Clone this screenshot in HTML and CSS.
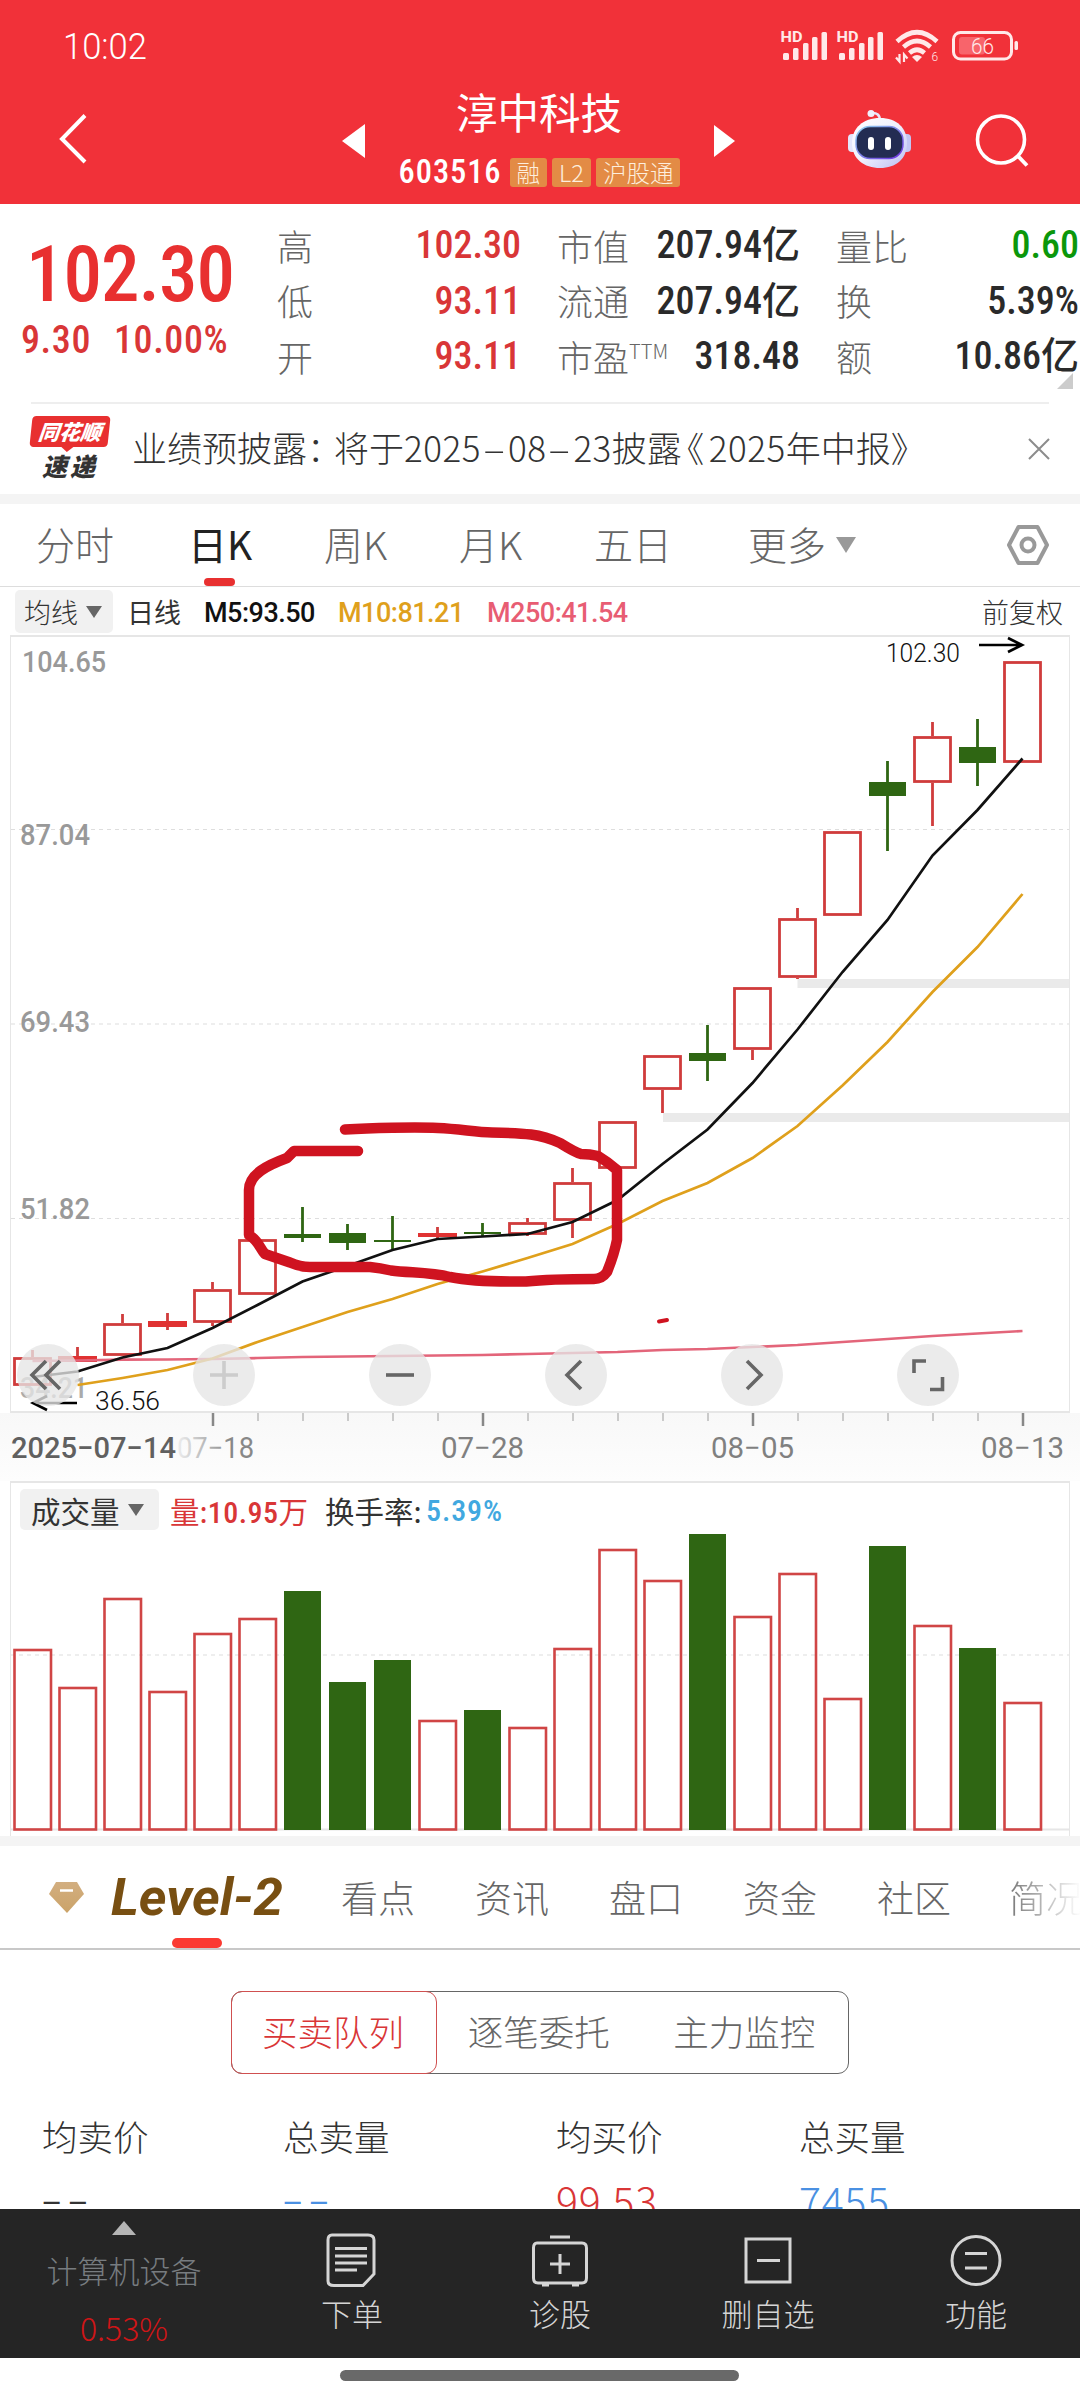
FILE: index.html
```html
<!DOCTYPE html>
<html lang="zh-Hans">
<head>
  <meta charset="UTF-8" />
  <meta name="viewport" content="width=device-width, initial-scale=1.0" />
  <title>淳中科技 603516</title>
  <link rel="stylesheet" href="styles.css">
</head>
<body>
  <header class="top">
    <div class="status">
      <svg class="clock" width="90" height="44"><text x="-1" y="31" textLength="84" lengthAdjust="spacingAndGlyphs">10:02</text></svg>
      <svg class="signals" width="240" height="36" viewBox="780 28 240 36">
        <g id="sig" fill="#ffe9e9">
          <text x="780.5" y="42" font-size="14" font-weight="700" textLength="22" lengthAdjust="spacingAndGlyphs">HD</text>
          <rect x="783" y="53" width="6" height="7" rx="1.5" /><rect x="793" y="48" width="5.5" height="12" rx="1.5" />
          <rect x="803" y="43" width="5.5" height="17" rx="1.5" /><rect x="812" y="37" width="5.5" height="23" rx="1.5" />
          <rect x="821.5" y="32" width="5.5" height="28" rx="1.5" />
        </g>
        <use href="#sig" x="56" />
        <g fill="none" stroke="#ffe9e9" stroke-width="4.6">
          <path d="M897 41.5Q917 23 937 41.5M903.5 47Q917 35 930.5 47M909.5 53Q917 46.5 924.5 53" />
        </g>
        <path d="M912 57Q917 53 922 57L917 62Z" fill="#ffe9e9" />
        <path d="M899.5 54V61.5L896 57.5M904 62V54.5L907.5 58.5" fill="none" stroke="#ffe9e9" stroke-width="2.2" />
        <text x="931.5" y="61" font-size="12" fill="#ffe9e9">6</text>
        <rect x="953.5" y="32.5" width="58" height="26.5" rx="7" fill="none" stroke="#ffe9e9" stroke-width="3" />
        <rect x="959" y="37" width="26" height="17.5" rx="3" fill="#f8646b" />
        <text x="971" y="53.5" font-size="22" fill="#ffe9e9" textLength="23" lengthAdjust="spacingAndGlyphs">66</text>
        <rect x="1014.5" y="41" width="3.5" height="9" rx="1.5" fill="#ffe9e9" />
      </svg>
    </div>
    <div class="titlebar">
      <svg class="back" width="30" height="52" viewBox="58 112 30 52"><path d="M85 115.5L62 139L85 162" fill="none" stroke="#fff" stroke-width="4" /></svg>
      <svg class="prev" width="24" height="34"><path d="M0 17L23 0V34Z" fill="#fff" /></svg>
      <div class="name">
        <h1>淳中科技</h1>
        <div class="code"><b class="num">603516</b><i>融</i><i>L2</i><i>沪股通</i></div>
      </div>
      <svg class="next" width="21" height="32"><path d="M21 16L0 0V32Z" fill="#fff" /></svg>
      <svg class="robot" width="66" height="62" viewBox="847 108 66 62">
        <defs>
          <linearGradient id="head" x1="0" y1="0" x2="1" y2="1"><stop offset="0" stop-color="#fff" /><stop offset=".5" stop-color="#f0f0fd" /><stop offset="1" stop-color="#b9bcf2" /></linearGradient>
          <linearGradient id="rim" x1="0" y1="0" x2="1" y2="1"><stop offset="0" stop-color="#8fd4ef" /><stop offset="1" stop-color="#6c2ee0" /></linearGradient>
        </defs>
        <path d="M871 113Q880 112 880 121" fill="none" stroke="#e9e6fb" stroke-width="2.5" /><circle cx="871" cy="113.5" r="3.5" fill="#f0effc" />
        <rect x="848" y="134" width="9" height="18" rx="4" fill="#e4e6fb" /><rect x="902" y="134" width="9" height="18" rx="4" fill="#c2c5f3" />
        <path d="M880 118C897 118 907 128 907 143C907 159 896 168 880 168C864 168 852 159 852 143C852 128 863 118 880 118Z" fill="url(#head)" />
        <rect x="856" y="126.5" width="47" height="32" rx="14" fill="#232c52" stroke="url(#rim)" stroke-width="1.5" />
        <rect x="868" y="137" width="6" height="13" rx="3" fill="#fff" /><rect x="885" y="137" width="6" height="13" rx="3" fill="#fff" />
      </svg>
      <svg class="search" width="54" height="54" viewBox="975 113 54 54"><circle cx="1001" cy="139.5" r="23.5" fill="none" stroke="#fff" stroke-width="3.6" /><path d="M1017 155L1027 165.5" stroke="#fff" stroke-width="3.8" /></svg>
    </div>
  </header>

  <section class="quote">
    <div class="price">
      <strong class="num">102.30</strong>
      <div><span class="num">9.30</span><span class="num">10.00%</span></div>
    </div>
    <dl class="c1"><dt>高</dt><dd class="num red">102.30</dd><dt>低</dt><dd class="num red">93.11</dd><dt>开</dt><dd class="num red">93.11</dd></dl>
    <dl class="c2"><dt>市值</dt><dd class="num">207.94亿</dd><dt>流通</dt><dd class="num">207.94亿</dd><dt>市盈<sup>TTM</sup></dt><dd class="num">318.48</dd></dl>
    <dl class="c3"><dt>量比</dt><dd class="num green">0.60</dd><dt>换</dt><dd class="num">5.39%</dd><dt>额</dt><dd class="num">10.86亿</dd></dl>
    <span class="corner"></span>
  </section>

  <section class="news">
    <div class="logo"><span>同花顺</span><b>速递</b></div>
    <p>业绩预披露<em class="colon">：</em>将于<span>2025<u>–</u>08<u>–</u>23</span>披露<em>《</em><span>2025</span>年中报》</p>
    <svg width="22" height="22"><path d="M1 1L21 21M21 1L1 21" stroke="#8c8c8c" stroke-width="2" /></svg>
  </section>

  <nav class="periods">
    <a>分时</a><a class="on">日K</a><a>周K</a><a>月K</a><a>五日</a><a>更多<i class="down"></i></a>
    <svg width="44" height="42" viewBox="0 0 44 42"><path d="M12.5 3H31.5L41 21L31.5 39H12.5L3 21Z" fill="none" stroke="#999" stroke-width="4" stroke-linejoin="round" /><circle cx="22" cy="21" r="6.5" fill="none" stroke="#999" stroke-width="4" /></svg>
  </nav>

  <div class="ma">
    <span class="chip">均线<i class="down"></i></span>
    <span class="day">日线</span>
    <span class="num m5">M5:93.50</span><span class="num m10">M10:81.21</span><span class="num m250">M250:41.54</span>
    <span class="adj">前复权</span>
  </div>

  <div class="kline">
    <svg id="kline" width="1058" height="774" viewBox="11 637 1058 774"></svg>
    <div class="tools">
      <i><svg viewBox="0 0 62 62"><path d="M29 17L15 31L29 45M43 17L29 31L43 45" /></svg></i>
      <i class="off"><svg viewBox="0 0 62 62"><path d="M17 31H45M31 17V45" /></svg></i>
      <i><svg viewBox="0 0 62 62"><path d="M17 31H45" /></svg></i>
      <i><svg viewBox="0 0 62 62"><path d="M36 17L22 31L36 45" /></svg></i>
      <i><svg viewBox="0 0 62 62"><path d="M26 17L40 31L26 45" /></svg></i>
      <i><svg viewBox="0 0 62 62"><path d="M17 29V17H29M33 45.5H45.5V33" /></svg></i>
    </div>
  </div>
  <svg id="axis" width="1080" height="68" viewBox="0 1413 1080 68"></svg>

  <div class="volume">
    <div class="vhead"><span class="chip">成交量<i class="down"></i></span><span class="amt">量:<b class="num">10.95</b>万</span><span class="rate">换手率:</span><b class="num pct">5.39%</b></div>
    <svg id="volume" width="1058" height="300" viewBox="11 1532 1058 300"></svg>
  </div>

  <nav class="sections">
    <svg class="gem" width="36" height="32" viewBox="0 0 36 32"><defs><linearGradient id="gold" x1="0" y1="0" x2="0" y2="1"><stop offset="0" stop-color="#d2ae80" /><stop offset="1" stop-color="#cba368" /></linearGradient></defs><path d="M7 0H28L35 12L18 31L0 12Z" fill="url(#gold)" /><path d="M11 8.5H24" stroke="#fff" stroke-width="2.5" /></svg>
    <svg class="level" width="172" height="60"><text x="-2" y="39" textLength="172" lengthAdjust="spacingAndGlyphs">Level-2</text></svg>
    <a>看点</a><a>资讯</a><a>盘口</a><a>资金</a><a>社区</a><a class="fade">简况</a>
  </nav>

  <div class="segment"><span class="on">买卖队列</span><span>逐笔委托</span><span>主力监控</span></div>

  <div class="stats">
    <div><label>均卖价</label><span class="none">––</span></div>
    <div><label>总卖量</label><span class="none blue">––</span></div>
    <div><label>均买价</label><span class="red">99.53</span></div>
    <div><label>总买量</label><span class="blue">7455</span></div>
  </div>

  <footer class="dock">
    <div class="sector"><i></i><span>计算机设备</span><b>0.53%</b></div>
    <div class="item"><svg viewBox="0 0 56 56"><path d="M8 3H44Q50 3 50 8V42L39 53.5H10Q4 53.5 4 49V8Q4 3 8 3Z" /><path d="M11 16.5H43M11 24H43M11 31H43M11 38H33" /></svg>下单</div>
    <div class="item"><svg viewBox="0 0 56 56"><path d="M18 5H38M5 11H50Q54.5 11 54.5 16V46Q54.5 51 50 51H6Q1.5 51 1.5 46V16Q1.5 11 5 11ZM28 22V42M18 32H38M10 53H17M40 53H47" /></svg>诊股</div>
    <div class="item"><svg viewBox="0 0 56 56"><path d="M6 7H50V50H6ZM17 28.5H40" /></svg>删自选</div>
    <div class="item"><svg viewBox="0 0 56 56"><circle cx="28" cy="28.5" r="24" /><path d="M17 21.5H39M17 36H39" /></svg>功能</div>
  </footer>
  <div class="homebar"></div>

  <script src="chart.js"></script>
</body>
</html>
```
FILE: styles.css
```css
* { box-sizing: border-box; }
body { margin: 0; width: 1080px; height: 2400px; overflow: hidden; background: #fff; color: #333; font-family: "Noto Sans CJK SC", sans-serif; font-weight: 300; }
h1, p, dl, dd { margin: 0; }
i, em { font-style: normal; }
svg { display: block; flex: none; overflow: visible; }
svg text { font-family: Roboto, sans-serif; }
.num { font-family: Roboto, "Noto Sans CJK SC", sans-serif; font-stretch: 87%; font-weight: 480; }
.red { color: #d93637; }
.green { color: #0b970b; }
.blue { color: #4a90e2; }

/* header */
.top { height: 204px; background: #f13139; color: #fff; }
.status { height: 90px; padding: 28px 60px 0 64px; display: flex; justify-content: space-between; }
.clock text { font-size: 37px; font-weight: 300; fill: #fff; }
.titlebar { display: flex; height: 114px; }
.back { margin: 22px 0 0 58px; }
.prev { margin: 34px 0 0 254px; }
.name { width: 348px; display: flex; flex-direction: column; align-items: center; }
.name h1 { font-size: 41.5px; font-weight: 400; line-height: 50px; height: 50px; margin: -4px 0 0 -2px; }
.code { margin-top: 22px; display: flex; gap: 5px; align-items: center; height: 29px; }
.code b { width: 106px; margin-left: -1px; font-size: 32.5px; letter-spacing: .9px; line-height: 29px; }
.code i { background: #e38b45; color: #fdeedd; border-radius: 3px; font-size: 23.5px; line-height: 28px; height: 29px; padding: 0 7px; }
.next { margin: 35px 0 0; }
.robot { margin: 18px 0 0 112px; }
.search { margin: 23px 0 0 62px; }

/* quote */
.quote { position: relative; height: 198px; display: flex; padding-top: 14px; }
.price { width: 277px; color: #d93637; }
.price strong { display: block; height: 92px; padding: 9px 0 0 26px; font-size: 77px; line-height: 96px; letter-spacing: -1px; color: #e83030; }
.price div { display: flex; gap: 23px; padding: 8px 0 0 21px; font-size: 38px; line-height: 44px; letter-spacing: .6px; }
.quote dl { display: grid; grid-template-columns: 72px 1fr; grid-auto-rows: 55.5px; align-items: center; font-size: 36px; line-height: 55px; color: #2a2a2a; }
.quote dt { color: #666; white-space: nowrap; margin-top: -1px; }
.quote dd { text-align: right; font-size: 38px; white-space: nowrap; }
.quote .red { color: #d93637; }
.quote .green { color: #0b970b; }
.quote sup { font-size: 20px; line-height: 0; }
.c1 { width: 244px; }
.c2 { width: 243px; margin-left: 36px; }
.c3 { width: 243px; margin-left: 36px; }
.corner { position: absolute; right: 7px; bottom: 13px; border-left: 16px solid transparent; border-bottom: 16px solid #ccc; }

.news { height: 92px; margin: 0 31px; border-top: 2px solid #eee; display: flex; align-items: center; }
.logo { width: 78px; margin-top: -2px; text-align: center; font-weight: 900; font-style: italic; }
.logo span { display: block; position: relative; background: #e83030; color: #fff; font-size: 21px; line-height: 31px; border-radius: 4px; transform: skewX(-6deg); }
.logo span::after { content: ""; position: absolute; left: 32px; top: 31px; border: 6px solid transparent; border-top: 5px solid #e83030; border-bottom: 0; }
.logo b { display: block; padding-top: 3px; font-size: 25px; font-weight: 900; letter-spacing: 3px; line-height: 30px; }
.news p { flex: 1; padding-left: 23px; margin-top: -5px; font-size: 35px; white-space: nowrap; }
.news p span { letter-spacing: .5px; }
.news u { display: inline-block; width: 27px; text-align: center; text-decoration: none; transform: scaleX(1.15); }
.news em { display: inline-block; width: 27px; font-feature-settings: "halt"; padding-left: 5px; }
.news .colon { padding-left: 0; }
.news svg { margin-right: -1px; }

/* period tabs */
.periods { display: flex; align-items: center; height: 93px; border-top: 10px solid #f4f4f4; border-bottom: 1px solid #ddd; font-size: 39px; color: #666; padding-left: 36px; position: relative; }
.periods a { position: relative; width: 135px; height: 82px; line-height: 79px; white-space: nowrap; }
.periods a:nth-child(1) { width: 152px; }
.periods a:nth-child(2) { width: 136px; }
.periods a:nth-child(5) { width: 154px; }
.periods a:nth-child(6) { width: 258px; }
.periods .on { color: #222; font-weight: 400; }
.periods .on::after { content: ""; position: absolute; left: 16px; bottom: 0; width: 31px; height: 8px; border-radius: 4px; background: #e83030; }
.down { display: inline-block; border: 10px solid transparent; border-top: 16px solid #999; border-bottom: 0; vertical-align: 7px; margin-left: 10px; }

.ma { display: flex; align-items: center; height: 48px; padding: 2px 17px 1px 15px; font-size: 27px; }
.ma span { flex: none; line-height: 40px; }
.ma .num { font-stretch: 100%; letter-spacing: -.5px; padding-top: 2px; }
.chip { display: flex; align-items: center; background: #f1f1f1; border-radius: 5px; }
.chip .down { border-width: 12px 8px 0; border-top-color: #666; margin-left: 8px; }
.ma .chip { width: 98px; height: 43px; padding-left: 9px; }
.day { width: 91px; padding-left: 14px; font-weight: 400; }
.m5 { width: 134px; color: #111; }
.m10 { width: 149px; color: #dfa01c; }
.m250 { color: #e85d73; }
.ma .adj { margin-left: auto; }

/* charts */
.kline { position: relative; margin: 0 10px; width: 1060px; height: 778px; border: 1px solid #e6e6e6; border-width: 2px 1px; }
.tools { position: absolute; left: 6px; top: 707px; display: flex; gap: 114px; }
.tools i { width: 62px; height: 62px; border-radius: 50%; background: rgba(230, 230, 230, .78); }
.tools path { fill: none; stroke: #666; stroke-width: 3.6; }
.tools .off path { stroke: #ccc; }
#axis { background: linear-gradient(#f8f8f8, #fdfdfd); }
.volume { margin: 0 10px; width: 1060px; height: 355px; border: 1px solid #e6e6e6; border-width: 2px 1px 0; }
.vhead { display: flex; align-items: center; height: 49px; padding: 6px 0 2px 9px; font-size: 29.5px; font-weight: 400; }
.vhead .chip { width: 139px; height: 41px; padding-left: 11px; }
.vhead .num { font-size: 30px; letter-spacing: .5px; }
.amt { margin-left: 11px; width: 155px; color: #d93637; }
.rate { width: 99px; white-space: nowrap; }
.vhead .pct { padding: 2px 0 0 2px; letter-spacing: .9px; color: #41a8e0; }

/* section tabs */
.sections { position: relative; display: flex; height: 114px; border-top: 10px solid #f4f4f4; border-bottom: 2px solid #c8c8c8; font-size: 37px; color: #666; overflow: hidden; line-height: 102px; }
.gem { margin: 36px 28px 0 49px; }
.level { margin: 30px 56px 0 0; }
.level text { font-size: 51px; font-weight: 700; font-style: italic; fill: #784f12; }
.sections a { flex: none; width: 134px; }
.sections::after { content: ""; position: absolute; left: 172px; bottom: 0; width: 50px; height: 10px; border-radius: 5px; background: #fb3a32; }
.sections .fade { width: 74px; margin-left: -2px; background: linear-gradient(90deg, #777, #fff 72px); -webkit-background-clip: text; background-clip: text; color: transparent; }

.segment { display: flex; width: 618px; height: 83px; margin: 41px 0 0 231px; border: 1.5px solid #666; border-radius: 11px; font-size: 35.5px; line-height: 78px; color: #666; text-align: center; }
.segment span { flex: 1; margin-left: -2px; }
.segment .on { flex: 0 0 206px; margin: -1px 0 -1px -1px; padding-right: 2px; border: 1.5px solid #d05050; border-radius: 11px; color: #d93637; }

.stats { position: relative; height: 135px; padding: 36px 0 0 42px; display: flex; overflow: hidden; font-size: 35.5px; }
.stats div { width: 241px; }
.stats div:nth-child(2) { width: 273px; }
.stats div:nth-child(3) { width: 243px; }
.stats label { display: block; line-height: 52px; }
.stats span { display: block; margin-top: 12px; line-height: 52px; font-size: 41px; letter-spacing: .8px; }
.stats .none { margin-top: 9px; font-size: 36px; letter-spacing: 7px; font-weight: 400; }

/* bottom dock */
.dock { display: flex; height: 149px; background: #252525; color: #d5d5d5; font-size: 31px; }
.sector { width: 248px; padding: 12px 0 0; text-align: center; color: #777c80; }
.sector i { display: block; width: 0; margin: 0 auto; border: 12.5px solid transparent; border-top: 0; border-bottom: 14px solid #b5b5b5; }
.sector span { display: block; line-height: 70px; }
.sector b { display: block; line-height: 44px; font-size: 32px; font-weight: 300; color: #d01517; }
.item { width: 208px; padding-top: 23px; text-align: center; line-height: 49px; }
.item svg { width: 56px; height: 56px; margin: 0 auto; fill: none; stroke: #d5d5d5; stroke-width: 3; }
.homebar { width: 399px; height: 11px; margin: 12px 0 0 340px; border-radius: 6px; background: #696969; }
```
FILE: chart.js
```js
// [up, high, bodyTop, bodyBottom, low, volumeTop] in page y coordinates
const days = [
  [1, 1350, 1357, 1386, 1386, 1650], [1, 1347, 1356, 1362, 1362, 1688], [1, 1314, 1323, 1356, 1356, 1599],
  [1, 1313, 1321, 1327, 1330, 1692], [1, 1282, 1289, 1323, 1326, 1634], [1, 1239, 1239, 1295, 1295, 1619],
  [0, 1207, 1234, 1238, 1242, 1591], [0, 1224, 1233, 1243, 1250, 1682], [0, 1216, 1240, 1242, 1249, 1660],
  [1, 1227, 1233, 1237, 1238, 1721], [0, 1223, 1232, 1234, 1236, 1710], [1, 1218, 1222, 1235, 1236, 1728],
  [1, 1168, 1182, 1221, 1238, 1649], [1, 1121, 1121, 1169, 1169, 1550], [1, 1055, 1055, 1090, 1113, 1581],
  [0, 1025, 1053, 1061, 1081, 1534], [1, 987, 987, 1050, 1060, 1617], [1, 908, 918, 978, 979, 1574],
  [1, 831, 831, 916, 916, 1699], [0, 761, 782, 796, 851, 1546], [1, 722, 736, 783, 826, 1626],
  [0, 719, 747, 763, 786, 1648], [1, 661, 661, 763, 763, 1703]
];
const ma5 = [1377, 1371.5, 1357.5, 1348, 1328, 1305, 1281.5, 1266, 1250, 1239, 1236.5, 1234, 1222, 1200, 1164, 1129.5, 1083, 1029.5, 972, 920, 855.5, 810, 758.5];
const ma10 = [null, 1385, 1378, 1370, 1358.5, 1342, 1327, 1312, 1299, 1284, 1271.5, 1258, 1244, 1224, 1201, 1183, 1158, 1126, 1085.5, 1042, 992, 947, 894];
const ma250 = [1361, 1360.5, 1359.7, 1359.5, 1359, 1358, 1357, 1356.5, 1356, 1355.5, 1355, 1354, 1353, 1352, 1350, 1349, 1347, 1345, 1342, 1339, 1336, 1333.5, 1331];
const RED = '#d03c3c', GREEN = '#2f6613';
const cx = i => 32.5 + 45 * i;

const line = (data, color) =>
  `<polyline fill="none" stroke="${color}" stroke-width="2.7" points="${data.map((y, i) => y === null ? '' : cx(i) + ',' + y).join(' ')}"/>`;
const label = (x, y, w, size, text, color, weight = 400) =>
  `<text x="${x}" y="${y}" font-size="${size}" font-weight="${weight}" fill="${color}" textLength="${w}" lengthAdjust="spacingAndGlyphs">${text}</text>`;
const grid = (y, dash) => `<path d="M11 ${y}H1069" stroke="#dedede" stroke-width="1.2" stroke-dasharray="${dash}"/>`;

let k = grid(829.5, '4 4') + grid(1024, '4 4') + grid(1218.5, '4 4');
k += '<path d="M797.5 983.5H1069M663 1117.5H1069" stroke="#eaeaea" stroke-width="9"/>';
k += label(22, 672, 84, 29.5, '104.65', '#999', 480) + label(20, 845, 70, 29.5, '87.04', '#999', 480)
   + label(20, 1032, 70, 29.5, '69.43', '#999', 480) + label(20, 1219, 70, 29.5, '51.82', '#999', 480)
   + label(20, 1398, 68, 29.5, '34.21', '#aaa', 480);
days.forEach(([up, high, top, bottom, low], i) => {
  const c = up ? RED : GREEN;
  k += `<path d="M${cx(i)} ${high}V${top}M${cx(i)} ${bottom}V${low}" stroke="${c}" stroke-width="2.8"/>`;
  if (up && bottom - top > 8) k += `<rect x="${cx(i) - 18}" y="${top + 1.5}" width="36" height="${bottom - top - 3}" fill="none" stroke="${c}" stroke-width="2.8"/>`;
  else k += `<rect x="${cx(i) - (up ? 19.5 : 18.5)}" y="${top}" width="${up ? 39 : 37}" height="${bottom - top}" fill="${up ? '#e03232' : c}"/>`;
});
k += line(ma250, '#e3657a') + line(ma10, '#dfa01c') + line(ma5, '#111');
k += label(886, 662, 74, 25.5, '102.30', '#111', 300) + label(95, 1410, 65, 25.5, '36.56', '#111', 300);
k += '<path d="M979 645H1022M1008 638L1022 645L1008 652M77 1403H33M47 1396L33 1403L47 1410" fill="none" stroke="#000" stroke-width="2.7"/>';
// hand-drawn mark round the sideways range
k += `<path d="M345 1129.5C370 1128 415 1127 438 1128C460 1129 475 1132 492 1132.5C525 1133 540 1134 560 1143C568 1148 574 1152 581 1154Q590 1154 598 1156Q608 1162 617 1170V1240C614 1255 611 1262 607 1272Q602 1279 594 1279C575 1279 550 1279 526 1281.5C490 1282 470 1281 450 1277C430 1272 410 1273 391 1270.5Q380 1268 370 1267H310Q300 1267 290 1262.5L265 1254C260 1249 259 1241 249 1235V1190C249 1174 268 1165 287 1158L294 1151H358" fill="none" stroke="#cf1320" stroke-width="10.5" stroke-linecap="round" stroke-linejoin="round"/>`;
k += '<path d="M659 1321.5L667 1320" stroke="#cf1320" stroke-width="4" stroke-linecap="round"/>';
document.getElementById('kline').innerHTML = k;

let a = '';
for (let i = 4; i < 23; i++) {
  const major = (i - 4) % 6 === 0;
  a += `<path d="M${cx(i) + .5} 1413V${major ? 1426 : 1421}" stroke="${major ? '#888' : '#bbb'}" stroke-width="${major ? 2.5 : 1.5}"/>`;
}
a += '<defs><linearGradient id="f"><stop offset="0" stop-color="#eee"/><stop offset=".7" stop-color="#888"/></linearGradient></defs>';
a += label(177, 1457.5, 77, 29.5, '07−18', 'url(#f)') + label(11, 1457.5, 165, 29.5, '2025−07−14', '#606060', 480)
   + label(441, 1457.5, 83, 29.5, '07−28', '#808080', 450) + label(711, 1457.5, 83, 29.5, '08−05', '#808080', 450)
   + label(981, 1457.5, 83, 29.5, '08−13', '#808080', 450);
document.getElementById('axis').innerHTML = a;

let v = grid(1655, '4 4') + '<path d="M11 1829.5H1069" stroke="#e6e6e6" stroke-width="2"/>';
days.forEach(([up, , , , , top], i) => {
  v += up
    ? `<rect x="${cx(i) - 18}" y="${top}" width="36.5" height="${1829.5 - top}" fill="none" stroke="#d04545" stroke-width="2.6"/>`
    : `<rect x="${cx(i) - 18.5}" y="${top}" width="37" height="${1830 - top}" fill="${GREEN}"/>`;
});
document.getElementById('volume').innerHTML = v;
```
